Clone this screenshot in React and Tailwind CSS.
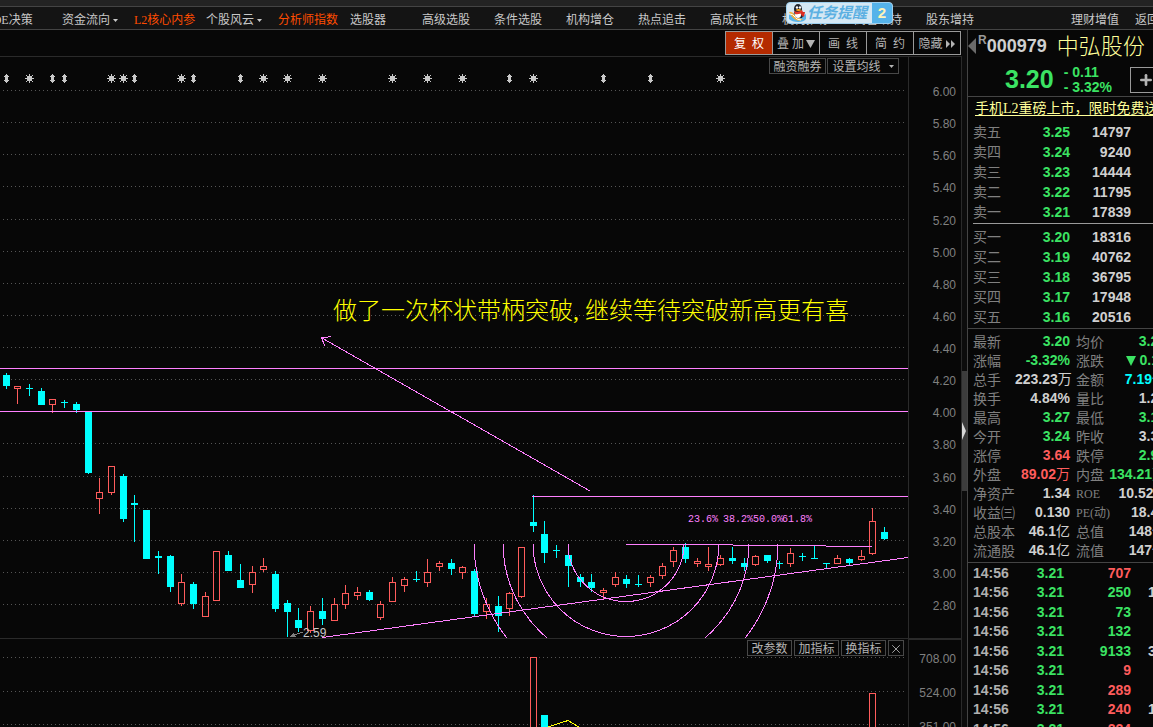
import { Plus, X } from "lucide-react";
import clsx from "clsx";

const navItems = [
  { label: "资金流向", menu: true },
  { label: "L2核心内参", hot: true },
  { label: "个股风云", menu: true },
  { label: "分析师指数", hot: true },
  { label: "选股器" },
  { label: "高级选股" },
  { label: "条件选股" },
  { label: "机构增仓" },
  { label: "热点追击" },
  { label: "高成长性" },
  { label: "机构推荐" },
  { label: "高管增持" },
  { label: "股东增持" },
];

const priceTicks = [
  "6.00", "5.80", "5.60", "5.40", "5.20", "5.00", "4.80", "4.60", "4.40",
  "4.20", "4.00", "3.80", "3.60", "3.40", "3.20", "3.00", "2.80",
];

const volumeTicks = ["708.00", "524.00", "351.00"];

// x, high, body top, body bottom, low, direction
const candles = [
  [6, 373, 375, 386, 389, "down"],
  [17, 386, 386, 389, 404, "up"],
  [29, 384, 388, 389, 396, "down"],
  [41, 388, 391, 405, 405, "down"],
  [52, 399, 399, 405, 413, "up"],
  [64, 400, 402, 403, 408, "down"],
  [76, 402, 404, 410, 413, "down"],
  [88, 411, 411, 473, 474, "down"],
  [99, 478, 492, 499, 514, "up"],
  [111, 466, 466, 493, 495, "up"],
  [123, 474, 476, 519, 522, "down"],
  [134, 495, 503, 505, 542, "down"],
  [146, 510, 510, 559, 559, "down"],
  [158, 551, 556, 558, 574, "down"],
  [170, 555, 556, 587, 592, "down"],
  [181, 574, 582, 604, 606, "up"],
  [193, 582, 584, 604, 609, "down"],
  [205, 592, 596, 617, 617, "up"],
  [216, 551, 551, 601, 601, "up"],
  [228, 551, 555, 571, 571, "down"],
  [240, 564, 580, 588, 588, "down"],
  [252, 566, 572, 585, 593, "up"],
  [263, 558, 566, 570, 572, "up"],
  [275, 571, 574, 609, 612, "down"],
  [287, 600, 603, 612, 637, "down"],
  [298, 608, 620, 628, 632, "down"],
  [310, 606, 611, 631, 633, "up"],
  [322, 598, 611, 619, 625, "down"],
  [334, 598, 604, 621, 621, "up"],
  [345, 585, 593, 605, 609, "up"],
  [357, 587, 592, 596, 600, "up"],
  [369, 590, 592, 600, 601, "down"],
  [380, 601, 604, 618, 620, "up"],
  [392, 577, 582, 602, 602, "up"],
  [404, 577, 579, 586, 592, "up"],
  [416, 571, 579, 580, 582, "down"],
  [427, 559, 572, 583, 587, "up"],
  [439, 561, 563, 567, 571, "up"],
  [451, 559, 563, 569, 575, "down"],
  [462, 566, 567, 573, 579, "up"],
  [474, 569, 571, 614, 616, "down"],
  [486, 598, 604, 612, 619, "up"],
  [498, 596, 606, 616, 632, "down"],
  [509, 592, 593, 609, 616, "up"],
  [521, 547, 547, 597, 598, "up"],
  [533, 495, 522, 526, 532, "down"],
  [544, 521, 534, 553, 563, "down"],
  [556, 545, 550, 551, 558, "down"],
  [568, 555, 555, 566, 587, "down"],
  [580, 574, 577, 582, 587, "down"],
  [591, 574, 582, 588, 592, "down"],
  [603, 588, 590, 593, 599, "up"],
  [615, 572, 577, 585, 587, "up"],
  [626, 575, 579, 584, 588, "down"],
  [638, 575, 584, 585, 587, "down"],
  [650, 575, 577, 583, 587, "up"],
  [662, 563, 566, 576, 579, "up"],
  [673, 547, 550, 562, 567, "up"],
  [685, 543, 547, 559, 563, "down"],
  [697, 558, 561, 564, 567, "up"],
  [708, 547, 564, 567, 571, "up"],
  [720, 555, 558, 565, 566, "up"],
  [732, 547, 558, 561, 564, "down"],
  [744, 558, 563, 567, 571, "down"],
  [755, 555, 556, 565, 566, "up"],
  [767, 555, 555, 561, 563, "down"],
  [779, 561, 563, 564, 569, "down"],
  [790, 548, 553, 564, 567, "up"],
  [802, 553, 556, 557, 561, "down"],
  [814, 545, 558, 559, 559, "down"],
  [826, 563, 563, 564, 568, "down"],
  [837, 555, 558, 564, 564, "up"],
  [849, 558, 559, 563, 565, "down"],
  [861, 550, 556, 560, 561, "up"],
  [872, 508, 521, 554, 555, "up"],
  [884, 527, 532, 539, 540, "down"],
];

const starMarks = [29, 111, 123, 181, 263, 287, 322, 392, 427, 462, 533, 720];
const arrowMarks = [6, 52, 64, 134, 193, 240, 509, 603, 650];

const ratios = [
  { label: "23.6%", x: 688, r: 58 },
  { label: "38.2%", x: 723, r: 93 },
  { label: "50.0%", x: 753, r: 123 },
  { label: "61.8%", x: 782, r: 152 },
];

const asks = [
  ["卖五", "3.25", "14797"],
  ["卖四", "3.24", "9240"],
  ["卖三", "3.23", "14444"],
  ["卖二", "3.22", "11795"],
  ["卖一", "3.21", "17839"],
];

const bids = [
  ["买一", "3.20", "18316"],
  ["买二", "3.19", "40762"],
  ["买三", "3.18", "36795"],
  ["买四", "3.17", "17948"],
  ["买五", "3.16", "20516"],
];

const stats = [
  [
    { label: "最新", value: "3.20", tone: "green" },
    { label: "均价", value: "3.22", tone: "green" },
  ],
  [
    { label: "涨幅", value: "-3.32%", tone: "green" },
    { label: "涨跌", value: "0.11", tone: "green", falling: true },
  ],
  [
    { label: "总手", value: "223.23", unit: "万" },
    { label: "金额", value: "7.19", unit: "亿", tone: "cyan" },
  ],
  [
    { label: "换手", value: "4.84%" },
    { label: "量比", value: "1.29" },
  ],
  [
    { label: "最高", value: "3.27", tone: "green" },
    { label: "最低", value: "3.16", tone: "green" },
  ],
  [
    { label: "今开", value: "3.24", tone: "green" },
    { label: "昨收", value: "3.31" },
  ],
  [
    { label: "涨停", value: "3.64", tone: "red" },
    { label: "跌停", value: "2.98", tone: "green" },
  ],
  [
    { label: "外盘", value: "89.02", unit: "万", tone: "red" },
    { label: "内盘", value: "134.21", unit: "万", tone: "green" },
  ],
  [
    { label: "净资产", value: "1.34" },
    { label: "ROE", value: "10.52%", small: true },
  ],
  [
    { label: "收益㈢", value: "0.130" },
    { label: "PE(动)", value: "18.45", small: true },
  ],
  [
    { label: "总股本", value: "46.1", unit: "亿" },
    { label: "总值", value: "148", unit: "亿" },
  ],
  [
    { label: "流通股", value: "46.1", unit: "亿" },
    { label: "流值", value: "147", unit: "亿" },
  ],
];

const trades = [
  ["14:56", "3.21", "707", "red", ""],
  ["14:56", "3.21", "250", "green", "1"],
  ["14:56", "3.21", "73", "green", ""],
  ["14:56", "3.21", "132", "green", ""],
  ["14:56", "3.21", "9133", "green", "3"],
  ["14:56", "3.21", "9", "red", ""],
  ["14:56", "3.21", "289", "red", ""],
  ["14:56", "3.21", "240", "red", "1"],
  ["14:56", "3.21", "224", "red", ""],
];

const tones = {
  green: "text-[#3be363]",
  red: "text-[#ff5c5c]",
  cyan: "text-[#00ffff]",
};

const gridY = (i) => Math.round(90 + i * 32.13) + 0.5;

const Caret = () => (
  <svg width="5" height="3" viewBox="0 0 5 3" fill="currentColor" aria-hidden="true">
    <path d="M0 0h5L2.5 3z" />
  </svg>
);

const Penguin = () => (
  <svg width="19" height="19" viewBox="0 0 19 19" aria-hidden="true">
    <path d="M1 11q5-4 8 0t9-1v5q-2 3-8 3T1 15z" fill="#58b4ea" />
    <path d="M1 8q3-1 6 3t8 4q-3 3-7 1T1 8z" fill="#f2b23c" />
    <path d="M2 10q3 0 5 3t6 3" fill="none" stroke="#fff" />
    <ellipse cx="10" cy="5" rx="4" ry="5" fill="#20242c" />
    <path d="M6 8l7-1 3 3-2 4H8z" fill="#20242c" />
    <ellipse cx="10" cy="11" rx="3" ry="3" fill="#fff" />
    <path d="M6 7q4 2 8-1l1 2q-4 3-8 2z" fill="#e33a2c" />
    <path d="M13 8l4 0-1 5-3-2z" fill="#d92c22" />
    <circle cx="9" cy="3.500" r="1.200" fill="#fff" />
    <circle cx="12" cy="3.500" r="1.200" fill="#fff" />
    <ellipse cx="10.500" cy="6" rx="2.500" ry="1" fill="#f8a81c" />
  </svg>
);

const NavBar = () => (
  <header className="relative shrink-0">
    <div className="h-[7px] bg-[#232323] border-b border-[#444444]" />
    <nav className="flex items-center h-[23px] pt-1 bg-[#141414] border-b border-[#444444] text-[#c8c8c8] whitespace-nowrap overflow-hidden">
      <a href="#dde" className="-ml-4 w-[78px] shrink-0">
        DDE决策
      </a>
      {navItems.map((item) => (
        <a
          key={item.label}
          href="#nav"
          className={clsx(
            "flex items-center gap-[3px] w-18 shrink-0",
            item.hot && "text-[#ff4c00]"
          )}
        >
          {item.label}
          {item.menu && <Caret />}
        </a>
      ))}
      <div className="ml-auto flex gap-4">
        <a href="#licai">理财增值</a>
        <a href="#back" className="w-[18px] overflow-hidden">
          返回
        </a>
      </div>
    </nav>
    <button className="absolute top-0.5 left-[786px] flex h-[22px] rounded overflow-hidden border border-[#9fd0ee] bg-[#d5e8f4] z-10 font-['Liberation_Sans','Noto_Sans_CJK_SC',sans-serif]">
      <span className="flex items-center pl-px w-[85px] text-[15px] leading-5 font-bold italic text-[#5cb0e2] whitespace-nowrap">
        <Penguin />
        任务提醒
      </span>
      <span className="w-5 h-full bg-[#55b3ea] text-[#fff3b8] text-[15px] leading-5 font-bold text-center">
        2
      </span>
    </button>
  </header>
);

const ToolButton = ({ active, children }) => (
  <button
    className={clsx(
      "flex items-center justify-center gap-0.5 w-12 h-6 pt-0.5 -ml-px border border-[#9a9a9a] whitespace-pre",
      active ? "bg-[#b42a00] text-white" : "text-[#b4b4b4]"
    )}
  >
    {children}
  </button>
);

const SmallButton = ({ children, className }) => (
  <button
    className={clsx(
      "flex items-center justify-center h-4 pt-px border border-[#484848] bg-[#070707] text-[#b4b4b4] leading-3",
      className
    )}
  >
    {children}
  </button>
);

const Candle = ({ data }) => {
  const [x, high, top, bottom, low, dir] = data;
  if (dir === "down") {
    return (
      <g fill="#00ffff">
        <rect x={x} y={high} width="1" height={low - high} />
        <rect x={x - 3} y={top} width="7" height={bottom - top} />
      </g>
    );
  }
  return (
    <g fill="#ff5c5c">
      <rect x={x} y={high} width="1" height={top - high} />
      <rect x={x} y={bottom} width="1" height={low - bottom} />
      <rect
        x={x - 2.5}
        y={top + 0.5}
        width="6"
        height={bottom - top - 1}
        fill="none"
        stroke="#ff5c5c"
      />
    </g>
  );
};

const PriceChart = () => (
  <svg
    viewBox="0 57 908 581"
    className="block w-full h-auto"
    role="img"
    aria-label="K线图"
  >
    <g shapeRendering="crispEdges">
      {priceTicks.map((tick, i) => (
        <line
          key={tick}
          x1="3"
          x2="905"
          y1={gridY(i)}
          y2={gridY(i)}
          stroke="#555555"
          strokeDasharray="1 3"
        />
      ))}
      <g fill="#c8c8c8">
        {starMarks.map((x) => (
          <path
            key={x}
            d={`M${x - 2} 76h5v5h-5zM${x} 74h1v9h-1zM${x - 4} 78h9v1h-9zM${x - 3} 75h1v1h-1zM${x + 3} 75h1v1h-1zM${x - 3} 81h1v1h-1zM${x + 3} 81h1v1h-1z`}
          />
        ))}
        {arrowMarks.map((x) => (
          <path
            key={x}
            d={`M${x} 74h1v9h-1zM${x - 1} 75h3v7h-3zM${x - 2} 76h5v1h-5zM${x - 2} 80h5v1h-5z`}
          />
        ))}
      </g>
      {candles.map((c) => (
        <Candle key={c[0]} data={c} />
      ))}
      <g fill="none" stroke="#ff80ff">
        <path d="M0 368.500H908M0 411.500H908M532 496.500H908" />
        <path d="M626 544.500H686L872 546.500" />
        <path d="M322 637.500L908 557.500" />
        <path d="M590 491L322 338M331 336.500L321.500 338L325 346" />
        {ratios.map(({ label, r }) => (
          <path key={label} d={`M${626 - r} 543.500A${r} ${r} 0 0 0 ${626 + r} 543.500`} />
        ))}
      </g>
      <path d="M303 632L294 635" stroke="#808080" />
      <path d="M289 637L294 633L296 637z" fill="#808080" />
    </g>
    <text
      x="303"
      y="637"
      className="text-[12px] fill-[#c8c8c8] font-['Liberation_Sans',sans-serif]"
    >
      2.59
    </text>
    {ratios.map(({ label, x }) => (
      <text
        key={label}
        x={x}
        y="522"
        className="text-[10px] fill-[#ff80ff] font-['Liberation_Mono',monospace]"
      >
        {label}
      </text>
    ))}
    <text y="319" className="text-[24px] font-light fill-[#ffff00]">
      <tspan x="333">做了一次杯状带柄突破,</tspan>
      <tspan x="585">继续等待突破新高更有喜</tspan>
    </text>
  </svg>
);

const VolumeChart = () => (
  <svg
    viewBox="0 639 908 88"
    className="block w-full h-auto"
    role="img"
    aria-label="成交量"
  >
    <g shapeRendering="crispEdges">
      {[657.5, 691.5, 724.5].map((y) => (
        <line
          key={y}
          x1="3"
          x2="905"
          y1={y}
          y2={y}
          stroke="#555555"
          strokeDasharray="1 3"
        />
      ))}
      <rect x="530.500" y="657.500" width="6" height="80" fill="#070707" stroke="#ff5c5c" />
      <rect x="541" y="715" width="7" height="12" fill="#00ffff" />
      <rect x="869.500" y="693.500" width="6" height="40" fill="#070707" stroke="#ff5c5c" />
      <path d="M548 727L568 720.500L579 727" fill="none" stroke="#ffff00" />
    </g>
  </svg>
);

const ChartArea = () => (
  <main className="flex flex-col flex-1 min-w-0">
    <div className="flex justify-end pt-px pr-px h-[27px] shrink-0 border-b border-[#2a2a2a]">
      <ToolButton active>{"复  权"}</ToolButton>
      <ToolButton>
        {"叠 加"}
        <svg width="9" height="8" viewBox="0 0 9 8" fill="currentColor" aria-hidden="true">
          <path d="M0 0h9L4.500 8z" />
        </svg>
      </ToolButton>
      <ToolButton>{"画  线"}</ToolButton>
      <ToolButton>{"简  约"}</ToolButton>
      <ToolButton>
        隐藏
        <svg width="11" height="8" viewBox="0 0 11 8" fill="currentColor" aria-hidden="true">
          <path d="M1 0l4 4-4 4zM6 0l4 4-4 4z" />
        </svg>
      </ToolButton>
    </div>

    <div className="flex shrink-0">
      <div className="relative flex-1 min-w-0">
        <PriceChart />
        <div className="absolute top-px right-[9px] flex gap-px">
          <SmallButton className="w-[57px]">融资融券</SmallButton>
          <SmallButton className="w-18 gap-2">
            设置均线
            <Caret />
          </SmallButton>
        </div>
      </div>
      <div className="flex flex-col justify-between w-[54px] pt-[27px] pb-6 pr-[5px] border-x border-[#2a2a2a] text-right leading-4 text-[#808080] font-['Liberation_Sans',sans-serif]">
        {priceTicks.map((tick) => (
          <span key={tick}>{tick}</span>
        ))}
      </div>
    </div>

    <div className="flex flex-1 min-h-0 border-t border-[#2a2a2a]">
      <div className="relative flex-1 min-w-0">
        <VolumeChart />
        <div className="absolute top-px right-1 flex gap-0.5">
          <SmallButton className="w-[45px]">改参数</SmallButton>
          <SmallButton className="w-[45px]">加指标</SmallButton>
          <SmallButton className="w-[45px]">换指标</SmallButton>
          <SmallButton className="w-4">
            <X size={14} strokeWidth={1.5} className="shrink-0" aria-label="关闭" />
          </SmallButton>
        </div>
      </div>
      <div className="flex flex-col gap-[18px] w-[54px] pt-[11px] pr-[5px] border-x border-t border-[#2a2a2a] text-right leading-4 text-[#808080] font-['Liberation_Sans',sans-serif]">
        {volumeTicks.map((tick) => (
          <span key={tick}>{tick}</span>
        ))}
      </div>
    </div>
  </main>
);

const PanelSplitter = () => (
  <div className="w-[5px] shrink-0 pt-[341px] bg-[#0c0c0c]">
    <button
      aria-label="收起侧栏"
      className="flex items-center w-full h-30 bg-[#3c3c3c]"
    >
      <svg width="4" height="18" viewBox="0 0 4 18" fill="#d8d8d8" aria-hidden="true">
        <path d="M0 0l4 9-4 9z" />
      </svg>
    </button>
  </div>
);

const numeric = "font-['Liberation_Sans',sans-serif] font-bold text-right";

const OrderBook = ({ rows, caption }) => (
  <table className="w-full table-fixed text-sm" aria-label={caption}>
    <colgroup>
      <col className="w-[50px]" />
      <col className="w-[47px]" />
      <col className="w-[61px]" />
      <col />
    </colgroup>
    <tbody>
      {rows.map(([label, price, volume]) => (
        <tr key={label} className="h-5 leading-5">
          <th className="pt-0.5 leading-[18px] font-normal text-left text-[#808080]">
            {label}
          </th>
          <td className={clsx(numeric, "text-[#3be363]")}>{price}</td>
          <td className={numeric}>{volume}</td>
          <td />
        </tr>
      ))}
    </tbody>
  </table>
);

const StatCells = ({ stat, className }) => (
  <>
    <th
      className={clsx(
        "pt-0.5 font-normal text-left text-[#808080]",
        stat.small ? "text-xs leading-[17px]" : "leading-[17px]",
        className
      )}
    >
      {stat.label}
    </th>
    <td className={clsx(numeric, tones[stat.tone])}>
      {stat.falling && (
        <svg
          width="10"
          height="10"
          viewBox="0 0 10 10"
          fill="currentColor"
          className="inline mr-1"
          aria-hidden="true"
        >
          <path d="M0 0h10L5 10z" />
        </svg>
      )}
      {stat.value}
      {stat.unit && (
        <span className="leading-none font-normal font-['Noto_Sans_CJK_SC',sans-serif]">
          {stat.unit}
        </span>
      )}
    </td>
  </>
);

const QuotePanel = () => (
  <aside className="w-[186px] shrink-0 overflow-hidden border-l border-[#444444] text-[#d0d0d0] whitespace-nowrap">
    <div className="h-[67px] border-b border-[#444444]">
      <div className="flex items-center h-8">
        <svg width="8" height="16" viewBox="0 0 8 16" fill="#6a6a6a" aria-hidden="true">
          <path d="M8 0v16L0 8z" />
        </svg>
        <sup className="ml-0.5 text-[12px] text-[#9a9a9a] font-bold font-['Liberation_Sans',sans-serif]">
          R
        </sup>
        <span className="text-[18px] font-bold font-['Liberation_Sans',sans-serif]">
          000979
        </span>
        <h1 className="ml-2.5 pt-0.5 text-[22px] leading-8 text-[#ffff99] font-light">
          中弘股份
        </h1>
      </div>
      <div className="flex items-center h-9 pl-[37px] text-[#3be363] font-bold font-['Liberation_Sans',sans-serif]">
        <span className="text-[25px]">3.20</span>
        <div className="ml-2.5 text-sm leading-[15px]">
          <p>- 0.11</p>
          <p>- 3.32%</p>
        </div>
        <button
          aria-label="加自选"
          className="flex items-center justify-center shrink-0 ml-[18px] w-8 h-[26px] border border-[#9a9a9a] text-[#b4b4b4]"
        >
          <Plus size={16} strokeWidth={4} />
        </button>
      </div>
    </div>

    <a
      href="#promo"
      className="block pl-[7px] pt-px h-[25px] text-sm leading-[22px] text-[#ffff99] underline underline-offset-2"
    >
      手机L2重磅上市，限时免费送
    </a>

    <div className="pl-[5px]">
      <OrderBook rows={asks} caption="卖盘" />
      <div className="mt-px mb-[3px] border-t border-[#9a9a9a]" />
      <OrderBook rows={bids} caption="买盘" />
    </div>

    <div className="pl-[5px] pt-[3px] pb-0.5 mt-px border-y border-[#444444]">
      <table className="w-[193px] table-fixed text-sm" aria-label="行情数据">
        <colgroup>
          <col className="w-[42px]" />
          <col className="w-[55px]" />
          <col className="w-[38px]" />
          <col />
        </colgroup>
        <tbody>
          {stats.map(([a, b]) => (
            <tr key={a.label} className="h-[19px] leading-[19px]">
              <StatCells stat={a} />
              <StatCells stat={b} className="pl-1.5" />
            </tr>
          ))}
        </tbody>
      </table>
    </div>

    <table
      className="ml-[5px] w-45 table-fixed text-sm font-bold font-['Liberation_Sans',sans-serif]"
      aria-label="成交明细"
    >
      <colgroup>
        <col className="w-[46px]" />
        <col className="w-[45px]" />
        <col className="w-[67px]" />
        <col />
      </colgroup>
      <tbody>
        {trades.map(([time, price, volume, tone, count], i) => (
          <tr key={i} className="odd:h-5 even:h-[19px] leading-[19px]">
            <td className="text-[#b0b0b0]">{time}</td>
            <td className="text-right text-[#3be363]">{price}</td>
            <td className={clsx("text-right", tones[tone])}>{volume}</td>
            <td className="pl-[17px]">{count}</td>
          </tr>
        ))}
      </tbody>
    </table>
  </aside>
);

const App = () => (
  <div className="flex flex-col h-screen overflow-hidden bg-[#070707] text-xs font-['Liberation_Serif','Noto_Sans_CJK_SC',sans-serif]">
    <NavBar />
    <div className="flex flex-1 min-h-0">
      <ChartArea />
      <PanelSplitter />
      <QuotePanel />
    </div>
  </div>
);

export default App;
